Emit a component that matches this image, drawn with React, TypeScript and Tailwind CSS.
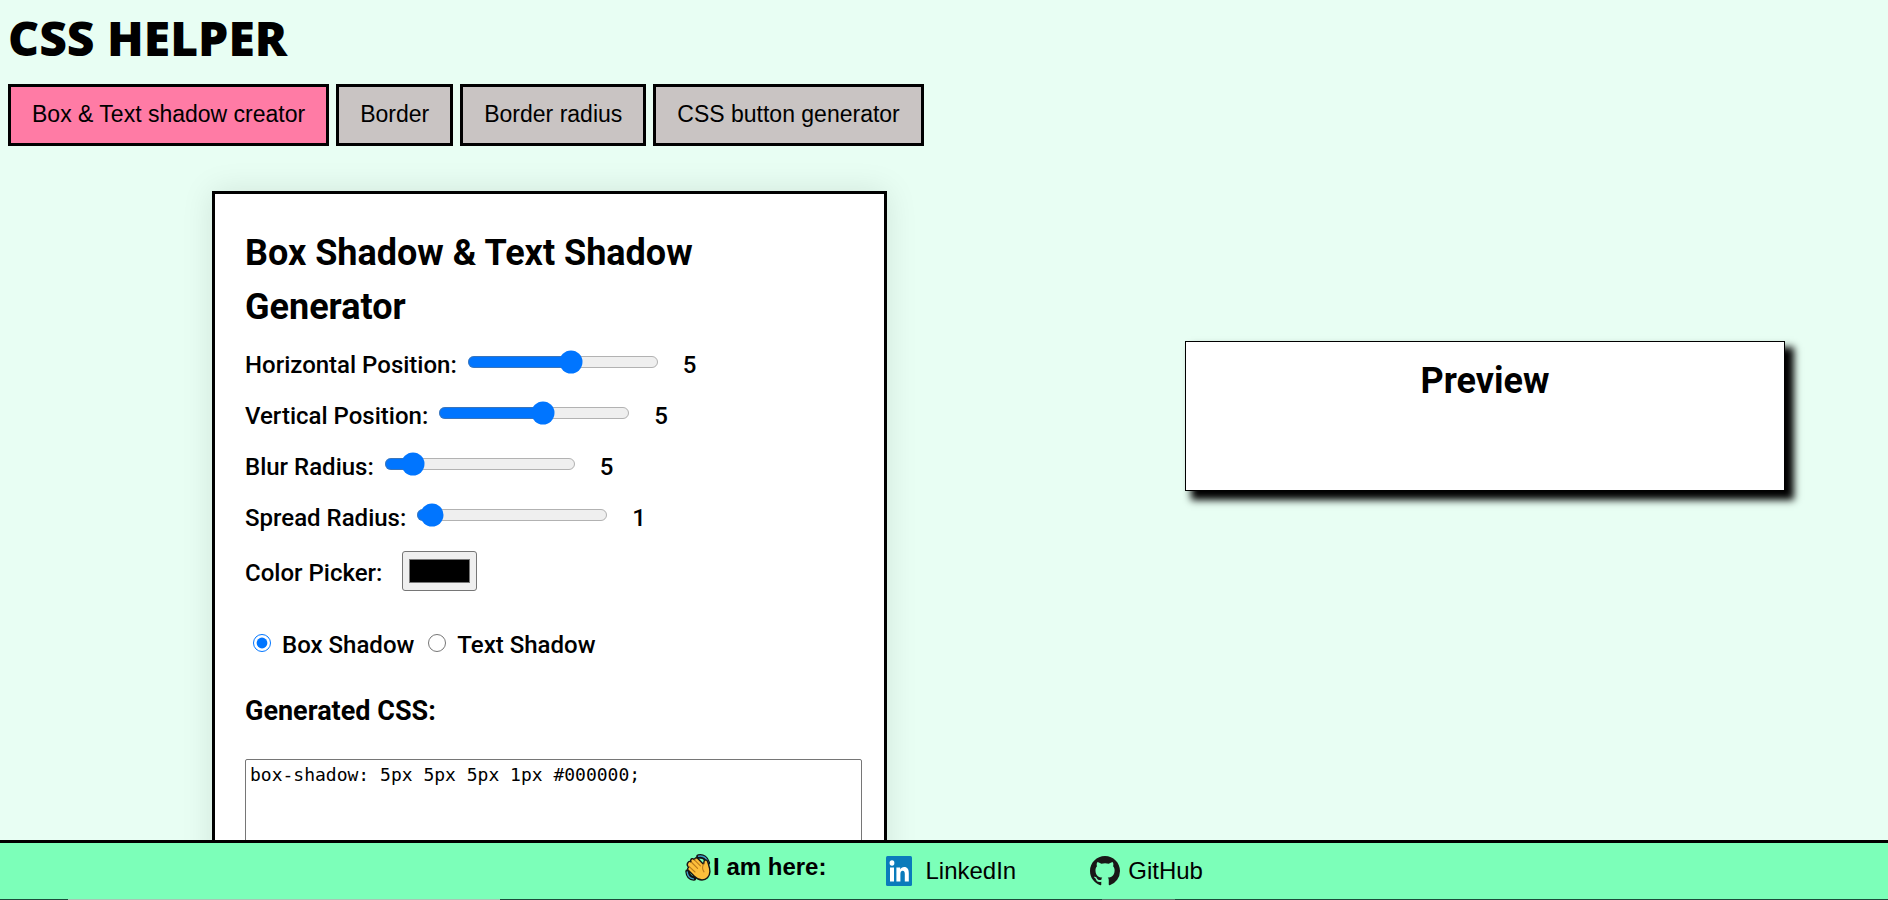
import { useId, useState } from 'react';

const tabs = ['Box & Text shadow creator', 'Border', 'Border radius', 'CSS button generator'];

type SliderRowProps = {
  label: string;
  min: number;
  max: number;
  value: number;
  onChange: (value: number) => void;
};

function SliderRow({ label, min, max, value, onChange }: SliderRowProps) {
  const id = useId();
  return (
    <div className="flex h-9 items-center">
      <label htmlFor={id} className="mr-2.5">{label}</label>
      <input
        id={id}
        type="range"
        min={min}
        max={max}
        value={value}
        onChange={(e) => onChange(Number(e.target.value))}
        className="mb-1 h-4 w-32 accent-[#0075ff] [zoom:1.5]"
      />
      <output htmlFor={id} className="ml-6">{value}</output>
    </div>
  );
}

function WavingHand() {
  return (
    <svg viewBox="0 0 26 27" className="h-[27px] w-[26px]" aria-hidden="true">
      <g fill="none" strokeLinecap="round">
        <path d="M13.5 2.6c4.500-1 8 1.500 9.300 6.200" stroke="#111" strokeWidth="4.600" />
        <path d="M2.600 17.500c.3 4 2.700 6.600 6.400 7" stroke="#111" strokeWidth="4.600" />
        <path d="M13.500 2.200c4.700-.8 8.200 1.800 9.600 6.400" stroke="#3d9cc4" strokeWidth="1.400" />
        <path d="M2.200 18c.3 3.800 2.500 6.400 6.200 6.900" stroke="#3d9cc4" strokeWidth="1.400" />
      </g>
      <path
        d="M3.200 8.200c.9-1.200 2.100-1 3-.2l-.6-1.500c.3-1.900 2.100-2.400 3.300-1.200l.5.500c.2-2 2-2.600 3.400-1.300l5.700 5.700c.6-1.300.2-3 .9-3.700 1.100-1 2.900-.4 3.300 1.300.8 3 2.400 6.300 2.200 9.900-.2 5-3.600 8.300-7.900 8.300-3.500 0-5.700-1.700-7.700-3.700l-6-6c-1-1.100-.8-2.500.4-3l-.9-1.100c-.9-1.300-.7-2.800.4-4z"
        fill="#fdbf3b"
        stroke="#151515"
        strokeWidth="1.400"
        strokeLinejoin="round"
      />
      <path
        d="M6.200 8l6.400 6.300M9.400 5.800l6 6M4 12.300l6 5.700M18.500 10.200c-1.400 2.600-1.300 5.200.5 7.600"
        fill="none"
        stroke="#b97a1c"
        strokeWidth="1.100"
        strokeLinecap="round"
      />
    </svg>
  );
}

function LinkedInLogo() {
  return (
    <svg viewBox="0 0 27 30" className="h-[30px] w-[27px]" aria-hidden="true">
      <rect width="26" height="30" x="0" y="0" rx="1.500" fill="#0a7bbb" />
      <ellipse cx="6" cy="7" rx="2.400" ry="2.700" fill="#fff" />
      <path d="M4 11.500h4v14H4z" fill="#fff" />
      <path
        d="M10.400 11.500h3.800v2c.7-1.400 2.100-2.400 4-2.400 3.300 0 4.600 2.300 4.600 6.200v8.200h-4v-7.300c0-2-.5-3.400-2.100-3.400-1.700 0-2.300 1.400-2.300 3.400v7.300h-4z"
        fill="#fff"
      />
    </svg>
  );
}

function GitHubLogo() {
  return (
    <svg viewBox="0 0 16 16" className="size-[30px]" fill="#191717" aria-hidden="true">
      <path d="M8 0C3.580 0 0 3.580 0 8c0 3.540 2.290 6.530 5.470 7.590.4.070.550-.170.550-.380 0-.190-.010-.820-.010-1.490-2.010.370-2.530-.490-2.690-.940-.090-.230-.480-.940-.820-1.130-.280-.150-.680-.520-.010-.530.630-.010 1.080.580 1.230.820.720 1.210 1.870.870 2.330.660.070-.520.280-.870.510-1.070-1.780-.2-3.640-.890-3.640-3.950 0-.870.310-1.590.820-2.150-.080-.2-.360-1.020.080-2.120 0 0 .670-.210 2.200.820.640-.180 1.320-.270 2-.270.680 0 1.360.090 2 .270 1.530-1.040 2.200-.820 2.200-.820.440 1.100.160 1.920.080 2.120.510.560.820 1.270.820 2.150 0 3.070-1.870 3.750-3.650 3.950.290.250.540.730.540 1.480 0 1.070-.010 1.930-.010 2.200 0 .210.150.460.550.380A8.013 8.013 0 0 0 16 8c0-4.420-3.580-8-8-8z" />
    </svg>
  );
}

export default function App() {
  const [activeTab, setActiveTab] = useState(0);
  const [horizontal, setHorizontal] = useState(5);
  const [vertical, setVertical] = useState(5);
  const [blur, setBlur] = useState(5);
  const [spread, setSpread] = useState(1);
  const [color, setColor] = useState('#000000');
  const [mode, setMode] = useState<'box' | 'text'>('box');

  const css =
    mode === 'box'
      ? `box-shadow: ${horizontal}px ${vertical}px ${blur}px ${spread}px ${color};`
      : `text-shadow: ${horizontal}px ${vertical}px ${blur}px ${color};`;
  const previewStyle =
    mode === 'box'
      ? { boxShadow: `${horizontal * 1.5}px ${vertical * 1.5}px ${blur * 1.5}px ${spread * 1.5}px ${color}` }
      : { textShadow: `${horizontal * 1.5}px ${vertical * 1.5}px ${blur * 1.5}px ${color}` };

  return (
    <div className="flex h-screen flex-col bg-[#e8fef3] font-['Roboto',sans-serif] text-2xl text-black">
      <header className="px-2 pt-2">
        <h1 className="font-['Open_Sans',sans-serif] text-5xl leading-[60px] font-extrabold">CSS HELPER</h1>
        <nav className="mt-4 flex flex-wrap gap-[7px] font-['Liberation_Sans',sans-serif] text-[23px]">
          {tabs.map((tab, i) => (
            <button
              key={tab}
              type="button"
              onClick={() => setActiveTab(i)}
              className={`h-[62px] border-3 border-black px-[21px] pb-0.5 ${i === activeTab ? 'bg-[#ff7ba5]' : 'bg-[#c9c4c3]'}`}
            >
              {tab}
            </button>
          ))}
        </nav>
      </header>

      <main className="flex min-h-0 flex-1 items-start justify-between overflow-hidden pt-[45px] pr-[103px] pl-[212px]">
        <section className="w-[675px] border-3 border-black bg-white px-[30px] pt-8 pb-[30px] font-medium shadow-[0_0_30px_rgba(0,0,0,0.1)]">
          <h2 className="text-[36px] leading-[54px] font-bold">Box Shadow &amp; Text Shadow Generator</h2>
          <div className="mt-[13px] flex flex-col gap-[15px]">
            <SliderRow label="Horizontal Position:" min={-50} max={50} value={horizontal} onChange={setHorizontal} />
            <SliderRow label="Vertical Position:" min={-50} max={50} value={vertical} onChange={setVertical} />
            <SliderRow label="Blur Radius:" min={0} max={50} value={blur} onChange={setBlur} />
            <SliderRow label="Spread Radius:" min={0} max={50} value={spread} onChange={setSpread} />
            <div className="flex h-10 items-end gap-5">
              <label htmlFor="shadow-color" className="leading-9">Color Picker:</label>
              <input
                id="shadow-color"
                type="color"
                value={color}
                onChange={(e) => setColor(e.target.value)}
                className="h-10 w-[75px] rounded-[3px] border border-[#767676] bg-[#efefef] px-1 py-[3px]"
              />
            </div>
          </div>
          <div className="mt-9 flex h-9 items-center pl-2">
            <input
              id="mode-box"
              type="radio"
              name="mode"
              checked={mode === 'box'}
              onChange={() => setMode('box')}
              className="mb-1 size-[18px] accent-[#0075ff]"
            />
            <label htmlFor="mode-box" className="ml-[11px]">Box Shadow</label>
            <input
              id="mode-text"
              type="radio"
              name="mode"
              checked={mode === 'text'}
              onChange={() => setMode('text')}
              className="mb-1 ml-3.5 size-[18px] accent-[#0075ff]"
            />
            <label htmlFor="mode-text" className="ml-[11px]">Text Shadow</label>
          </div>
          <h3 className="mt-[27px] text-[27px] leading-[42px] font-bold">
            <label htmlFor="generated-css">Generated CSS:</label>
          </h3>
          <textarea
            id="generated-css"
            readOnly
            rows={6}
            value={css}
            className="mt-[27px] block w-[617px] resize-none rounded-[2px] border border-[#767676] bg-white px-1 py-[3px] font-['DejaVu_Sans_Mono',monospace] text-lg leading-6 font-normal"
          />
        </section>

        <section
          style={previewStyle}
          className="mt-[150px] h-[150px] w-[600px] border border-black bg-white pt-3 text-center"
        >
          <h2 className="text-[36px] leading-[54px] font-bold">Preview</h2>
        </section>
      </main>

      <footer className="relative border-t-3 border-black bg-[#7cffb9] font-['Liberation_Sans',sans-serif]">
        <div className="flex h-14 items-center justify-center">
          <p className="mb-2 flex items-center gap-0.5 font-bold">
            <WavingHand />
            I am here:
          </p>
          <a href="https://www.linkedin.com" className="ml-[60px] flex items-center gap-3">
            <LinkedInLogo />
            LinkedIn
          </a>
          <a href="https://github.com" className="ml-[74px] flex items-center gap-2">
            <GitHubLogo />
            GitHub
          </a>
        </div>
        <div className="flex h-px bg-[#1d4a3a]">
          <span className="ml-[68px] w-[432px] bg-[#a9c4b4]" />
          <span className="ml-[602px] w-[73px] bg-[#5a7a6c]" />
        </div>
      </footer>
    </div>
  );
}
